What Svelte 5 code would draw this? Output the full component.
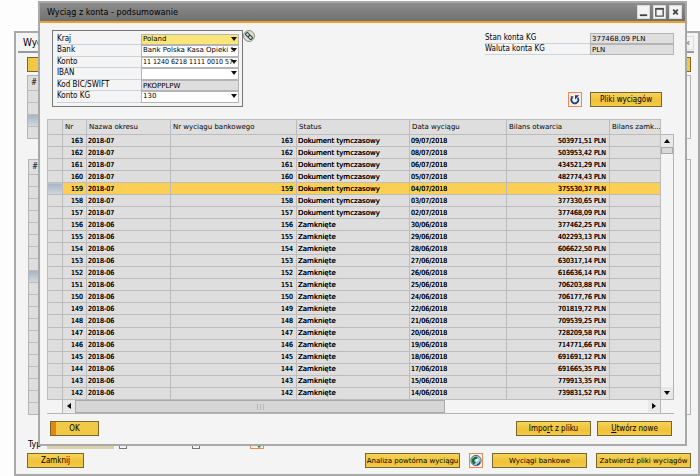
<script lang="ts">
    type Row = { nr: number; period: string; status: string; date: string; opening: string };

    const draft = 'Dokument tymczasowy';
    const closed = 'Zamknięte';

    const rows: Row[] = [
        ['09/07/2018', '503971,51'],
        ['08/07/2018', '503953,42'],
        ['06/07/2018', '434521,29'],
        ['05/07/2018', '482774,43'],
        ['04/07/2018', '375530,37'],
        ['03/07/2018', '377330,65'],
        ['02/07/2018', '377468,09'],
        ['30/06/2018', '377462,25'],
        ['29/06/2018', '402293,13'],
        ['28/06/2018', '606622,50'],
        ['27/06/2018', '630317,14'],
        ['26/06/2018', '616636,14'],
        ['25/06/2018', '706203,88'],
        ['24/06/2018', '706177,76'],
        ['22/06/2018', '701819,72'],
        ['21/06/2018', '709539,25'],
        ['20/06/2018', '728209,58'],
        ['19/06/2018', '714771,66'],
        ['18/06/2018', '691691,12'],
        ['17/06/2018', '691665,35'],
        ['15/06/2018', '779913,35'],
        ['14/06/2018', '739831,52'],
    ].map(([date, opening], i) => ({
        nr: 163 - i,
        period: i < 7 ? '2018-07' : '2018-06',
        status: i < 7 ? draft : closed,
        date,
        opening: opening + ' PLN',
    }));

    let selected = $state(159);

    const fields = [
        { id: 'country', label: 'Kraj', value: 'Poland', kind: 'select', active: true },
        { id: 'bank', label: 'Bank', value: 'Bank Polska Kasa Opieki SA', kind: 'select' },
        { id: 'account', label: 'Konto', value: '11 1240 6218 1111 0010 5770', kind: 'select', digits: true },
        { id: 'iban', label: 'IBAN', value: '', kind: 'select' },
        { id: 'bic', label: 'Kod BIC/SWIFT', value: 'PKOPPLPW', kind: 'text' },
        { id: 'ledger', label: 'Konto KG', value: '130', kind: 'select' },
    ];
    const balances = [
        { id: 'balance', label: 'Stan konta KG', value: '377468,09 PLN' },
        { id: 'currency', label: 'Waluta konta KG', value: 'PLN' },
    ];
</script>

<div class="desktop">
    <section class="window back">
        <header class="back-title">
            <h2>Wyciągi</h2>
            <button class="win-btn faded" aria-label="Zamknij okno">
                <svg viewBox="0 0 12 12"><path d="M4 4l4 4M8 4l-4 4" stroke="#999" stroke-width="1.5" /></svg>
            </button>
        </header>
        <div class="back-bar"></div>
        <div class="back-grid first">
            <div class="back-head">#</div>
            {#each Array(4) as _, i}
                <div class="back-row" class:marked={i === 2}></div>
            {/each}
        </div>
        <div class="back-grid second">
            <div class="back-head">#</div>
            {#each Array(20) as _, i}
                <div class="back-row" class:marked={i === 8}></div>
            {/each}
        </div>
        <div class="filter">
            <label for="type">Typ</label>
            <input id="type" class="type" type="text" />
            <input type="checkbox" aria-label="Filtr 1" />
            <input class="wide" type="checkbox" aria-label="Filtr 2" />
            <button class="icon-btn" aria-label="Filtruj">
                <svg viewBox="0 0 14 14"><path d="M3 8l6-5v3l2 1v7H8v-3z" fill="#278c27" /></svg>
            </button>
        </div>
        <footer class="back-footer">
            <button class="btn close">Zamknij</button>
            <span class="grow"></span>
            <button class="btn big">Analiza powtórna wyciągu</button>
            <button class="icon-btn" aria-label="Odśwież listę">
                <svg viewBox="0 0 14 14">
                    <circle cx="7" cy="7" r="6" fill="#a9c8de" stroke="#345d86" stroke-width="1" />
                    <path d="M2 8c0-4 4-6 7-5L8 5C6 5 5 6 5 8l2 1-3 3z" fill="#15702c" />
                    <path d="M8 11c2 0 3-1 3-3l1 1c0 2-2 4-4 3z" fill="#1c4377" />
                    <path d="M6 6l3-1 1 2-3 2z" fill="#f2f8fb" />
                </svg>
            </button>
            <button class="btn big">Wyciągi bankowe</button>
            <button class="btn big">Zatwierdź pliki wyciągów</button>
        </footer>
    </section>

    <section class="window front">
        <header class="title">
            <h1>Wyciąg z konta - podsumowanie</h1>
            <button class="win-btn" aria-label="Minimalizuj">
                <svg viewBox="0 0 12 12"><path d="M2 9.5h8" stroke="#444" stroke-width="2" /></svg>
            </button>
            <button class="win-btn" aria-label="Maksymalizuj">
                <svg viewBox="0 0 12 12"><path d="M2 2v8.5h8V2" fill="none" stroke="#505050" stroke-width="1.5" /><path d="M1.5 2.5h9" stroke="#444" stroke-width="2" /></svg>
            </button>
            <button class="win-btn" aria-label="Zamknij">
                <svg viewBox="0 0 12 12"><path d="M3.5 3.5l5 5M8.5 3.5l-5 5" stroke="#444" stroke-width="2" /></svg>
            </button>
        </header>

        <div class="top">
            <div class="account">
                {#each fields as field}
                    <div class="field">
                        <label for={field.id}>{field.label}</label>
                        {#if field.kind === 'select'}
                            <span class="select" class:active={field.active} class:digits={field.digits}>
                                <select id={field.id}>
                                    <option>{field.value}</option>
                                </select>
                            </span>
                        {:else}
                            <input id={field.id} type="text" value={field.value} readonly />
                        {/if}
                    </div>
                {/each}
            </div>
            <button class="link-btn" aria-label="Powiązanie">
                <svg viewBox="0 0 12 12">
                    <circle cx="6" cy="6" r="5.5" fill="#dedecf" stroke="#8f8f7c" />
                    <g transform="rotate(45 6 6)" fill="#c3d2dc" stroke="#2c3b44">
                        <rect x="2" y="4.5" width="4" height="3" rx="1" />
                        <rect x="6" y="4.5" width="4" height="3" rx="1" />
                    </g>
                </svg>
            </button>
            <div class="side">
                {#each balances as item}
                    <div class="field">
                        <label for={item.id}>{item.label}</label>
                        <input id={item.id} type="text" value={item.value} readonly />
                    </div>
                {/each}
                <div class="files">
                    <button class="icon-btn" aria-label="Odśwież">
                        <svg viewBox="0 0 14 14">
                            <path d="M4 4.5A4 4 0 1 0 10 5" fill="none" stroke="#1b3f86" stroke-width="2" />
                            <path d="M7 2h5L7 7z" fill="#1b3f86" />
                            <path d="M2 4h3" stroke="#1b3f86" stroke-width="1.5" />
                        </svg>
                    </button>
                    <button class="btn">Pliki wyciągów</button>
                </div>
            </div>
        </div>

        <div class="grid">
            <table>
                <colgroup>
                    <col class="c-mark" /><col class="c-nr" /><col class="c-period" /><col class="c-bank" />
                    <col class="c-status" /><col class="c-date" /><col class="c-open" /><col />
                </colgroup>
                <thead>
                    <tr>
                        <th></th>
                        <th>Nr</th>
                        <th>Nazwa okresu</th>
                        <th>Nr wyciągu bankowego</th>
                        <th>Status</th>
                        <th>Data wyciągu</th>
                        <th>Bilans otwarcia</th>
                        <th>Bilans zamk...</th>
                    </tr>
                </thead>
                <tbody>
                    {#each rows as row}
                        <tr class:selected={row.nr === selected} onclick={() => (selected = row.nr)}>
                            <td class="mark"></td>
                            <td class="num">{row.nr}</td>
                            <td>{row.period}</td>
                            <td class="num">{row.nr}</td>
                            <td class="status">{row.status}</td>
                            <td>{row.date}</td>
                            <td class="num">{row.opening}</td>
                            <td></td>
                        </tr>
                    {/each}
                </tbody>
            </table>
            <div class="vscroll">
                <button aria-label="W górę"><svg viewBox="0 0 6 4"><path d="M0 4h6L3 0z" /></svg></button>
                <div class="vthumb"></div>
                <button class="end" aria-label="W dół"><svg viewBox="0 0 6 4"><path d="M0 0h6L3 4z" /></svg></button>
            </div>
            <div class="hscroll">
                <button aria-label="W lewo"><svg viewBox="0 0 4 6"><path d="M4 0v6L0 3z" /></svg></button>
                <div class="hthumb">
                    <svg viewBox="0 0 7 6"><path d="M0 1h7M0 3h7M0 5h7" stroke="#999" stroke-dasharray="1 2" /></svg>
                </div>
                <button class="end" aria-label="W prawo"><svg viewBox="0 0 4 6"><path d="M0 0v6l4-3z" /></svg></button>
            </div>
        </div>

        <footer class="actions">
            <button class="btn ok">OK</button>
            <span class="grow"></span>
            <button class="btn">Impo<u>r</u>t z pliku</button>
            <button class="btn"><u>U</u>twórz nowe</button>
        </footer>
    </section>
</div>

<style>
    :global(body) {
        background: #fdfdfd;
    }
    .desktop, .desktop * {
        box-sizing: border-box;
    }
    .desktop {
        position: relative;
        display: flex;
        min-height: 100vh;
        padding: 31px 0 0 14px;
        overflow: hidden;
        font-family: "DejaVu Sans Condensed", "DejaVu Sans", sans-serif;
        font-size: 8px;
        line-height: 10px;
        color: #000;
    }
    button, input, select {
        margin: 0;
        padding: 0;
        border: 0;
        border-radius: 0;
        font: inherit;
        color: inherit;
        appearance: none;
    }
    svg {
        display: block;
    }
    h1, h2 {
        margin: 0;
        font-weight: 400;
        font-size: 9px;
        line-height: 16px;
    }
    .grow {
        flex: 1;
    }
    .window {
        display: flex;
        flex-direction: column;
        background: #f4f4f4;
        border: 2px solid #a9a9a9;
    }

    /* buttons */
    .btn {
        height: 15px;
        background: linear-gradient(#f6d35c, #efc236 60%, #f2cb4c);
        border: 1px solid #77672e;
        text-align: center;
        white-space: nowrap;
    }
    .icon-btn {
        width: 14px;
        height: 15px;
        background: #fbeee2;
        border: 1px solid #e88a56;
    }
    .icon-btn svg {
        width: 12px;
        height: 13px;
    }
    .win-btn {
        width: 13px;
        height: 14px;
        background: #f4f4f4;
        border: 1px solid #d8d8d8;
    }
    .win-btn svg {
        width: 11px;
        height: 12px;
    }
    .faded {
        border-color: #ddd;
    }

    /* window underneath */
    .back {
        flex: 1;
        min-width: 0;
        padding: 2px 7px 6px 11px;
    }
    .back-title {
        display: flex;
        align-items: center;
        justify-content: space-between;
        height: 18px;
        margin: 0 -3px 4px -9px;
        padding-left: 5px;
        border-bottom: 2px solid #999;
    }
    .back-title h2 {
        font-size: 10px;
    }
    .back-bar {
        height: 15px;
        background: #f1c744;
        border: 1px solid #77672e;
    }
    .back-grid {
        padding-right: 12px;
        border: 1px solid #b5b5b5;
    }
    .first {
        margin-top: 3px;
    }
    .second {
        margin: 20px 0 0 1px;
    }
    .back-head {
        height: 14px;
        padding-left: 3px;
        background: #dedede;
        line-height: 14px;
    }
    .back-row {
        height: 12px;
        background: #dedede;
        border-top: 1px solid #bbb;
    }
    .marked {
        background: linear-gradient(#a7b4c4, #d0d8e0);
    }
    .filter {
        display: flex;
        align-items: flex-end;
        margin-top: auto;
        padding-left: 1px;
        gap: 5px;
    }
    .filter label {
        width: 14px;
        font-size: 9px;
    }
    .filter .icon-btn {
        margin-left: 45px;
    }
    .type {
        width: 67px;
        height: 12px;
        background: #d9d2ae;
    }
    .filter input[type="checkbox"] {
        width: 8px;
        height: 10px;
        border: 1px solid #777;
    }
    .filter .wide {
        margin-left: 60px;
    }
    .back-footer {
        display: flex;
        align-items: center;
        margin-top: 4px;
        gap: 9px;
    }
    .close {
        width: 57px;
    }
    .big {
        width: 95px;
        font-family: "DejaVu Sans", sans-serif;
        font-size: 7px;
    }

    /* statement summary window */
    .front {
        position: absolute;
        top: 1px;
        left: 38px;
        right: 13px;
    }
    .title {
        display: flex;
        align-items: center;
        height: 20px;
        padding: 0 3px 0 7px;
        gap: 3px;
        background: linear-gradient(#8d8d8d, #707070);
        border-bottom: 2px solid #eba127;
    }
    .title h1 {
        flex: 1;
    }
    .top {
        display: flex;
        align-items: flex-start;
        padding: 7px 11px 0 12px;
    }
    .account {
        width: 191px;
        padding: 3px 3px 3px 4px;
        border: 1px solid #777;
    }
    .field {
        display: flex;
        height: 11px;
    }
    .account .field:nth-child(2n) {
        height: 12px;
    }
    .field label {
        flex: 1;
        border-bottom: 1px solid #ccd2da;
    }
    .field input, .select {
        width: 98px;
        height: 100%;
        padding-left: 1px;
        background: #dedede;
        border: 1px solid #b4b4b4;
        font-family: "DejaVu Sans", sans-serif;
        font-size: 7px;
    }
    .field input {
        line-height: 9px;
    }
    .select {
        position: relative;
        background: #fff;
    }
    .active {
        background: #fae678;
    }
    .digits {
        font-family: "DejaVu Sans Condensed", sans-serif;
    }
    .select::after {
        content: "";
        position: absolute;
        top: 2px;
        right: 1px;
        border: 3px solid transparent;
        border-top: 4px solid #111;
        border-bottom: 0;
        pointer-events: none;
    }
    select {
        display: block;
        width: 90px;
        height: 9px;
        line-height: 9px;
        background: transparent;
    }
    .link-btn {
        background: none;
    }
    .link-btn svg {
        width: 12px;
        height: 12px;
    }
    .side {
        flex: 1;
        margin-left: auto;
        max-width: 189px;
        padding-top: 3px;
    }
    .side .field input {
        width: 84px;
    }
    .files {
        display: flex;
        justify-content: flex-end;
        margin-top: 37px;
        padding-right: 12px;
        gap: 8px;
    }
    .files .btn {
        width: 72px;
    }

    /* statement list */
    .grid {
        display: grid;
        grid-template-columns: 1fr 13px;
        margin: 12px 11px 0 7px;
        border-bottom: 1px solid #b5b5b5;
    }
    table {
        width: 100%;
        height: 281px;
        table-layout: fixed;
        border-collapse: collapse;
        background: #dedede;
    }
    .c-mark { width: 15px; }
    .c-nr { width: 24px; }
    .c-period { width: 84px; }
    .c-bank { width: 126px; }
    .c-status { width: 113px; }
    .c-date { width: 97px; }
    .c-open { width: 103px; }
    th, td {
        height: 12px;
        padding: 0 1px;
        border: 1px solid #bcbcbc;
        font-size: 7px;
        line-height: 10px;
        white-space: nowrap;
        overflow: hidden;
    }
    th {
        height: 15px;
        padding: 0 0 0 2px;
        font-family: "DejaVu Sans", sans-serif;
        font-weight: 400;
        text-align: left;
    }
    td {
        text-shadow: 0 0 0 #000;
    }
    .status {
        font-family: "DejaVu Sans", sans-serif;
    }
    .num {
        padding-right: 3px;
        text-align: right;
    }
    .selected {
        background: #fbcf53;
    }
    .selected .mark {
        background: linear-gradient(#a7b4c4, #d0d8e0);
    }
    .vscroll {
        display: flex;
        flex-direction: column;
        margin-top: 15px;
        border: 1px solid #b5b5b5;
        border-left: 0;
    }
    .vscroll button, .hscroll button {
        display: flex;
        align-items: center;
        justify-content: center;
        width: 12px;
        height: 12px;
        background: #e8e8e8;
    }
    .vscroll svg {
        width: 6px;
        height: 4px;
    }
    .hscroll svg {
        width: 4px;
        height: 6px;
    }
    .vthumb {
        height: 7px;
        background: #d8d8d8;
        border: 1px solid #aaa;
    }
    .vscroll .end {
        margin-top: auto;
    }
    .hscroll {
        display: flex;
        height: 13px;
        margin-left: 15px;
        border: 1px solid #b5b5b5;
        border-width: 0 1px;
    }
    .hthumb {
        display: flex;
        align-items: center;
        justify-content: center;
        width: 62%;
        background: #d6d6d6;
        border: 1px solid #aaa;
    }
    .hthumb svg {
        width: 7px;
    }
    .hscroll .end {
        margin-left: auto;
    }
    .actions {
        display: flex;
        padding: 7px 13px 8px 10px;
        gap: 6px;
    }
    .actions .btn {
        width: 75px;
    }
    .actions .ok {
        width: 49px;
        background: linear-gradient(to right, #e8850c 5px, #f2c947 5px);
    }
</style>
